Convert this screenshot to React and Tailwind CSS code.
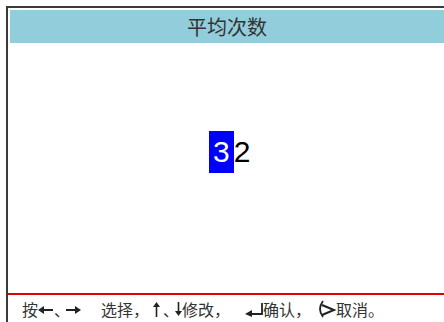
import React from "react";

const cjk = { fontFamily: '"Noto Sans CJK SC", "Noto Sans", sans-serif' };

function LeftArrow() {
  return (
    <svg width="15" height="16" viewBox="0 0 15 16" className="shrink-0">
      <line x1="4" y1="9" x2="15" y2="9" stroke="#222" strokeWidth="2" />
      <polygon points="0,9 6,5 6,13" fill="#222" />
    </svg>
  );
}
function RightArrow() {
  return (
    <svg width="15" height="16" viewBox="0 0 15 16" className="shrink-0">
      <line x1="0" y1="9" x2="10" y2="9" stroke="#222" strokeWidth="2" />
      <polygon points="15,9 9,5 9,13" fill="#222" />
    </svg>
  );
}
function UpArrow() {
  return (
    <svg width="7" height="16" viewBox="0 0 7 16" className="shrink-0">
      <line x1="3.5" y1="4" x2="3.5" y2="16" stroke="#222" strokeWidth="1.6" />
      <polygon points="3.5,1 0,6 7,6" fill="#222" />
    </svg>
  );
}
function DownArrow() {
  return (
    <svg width="7" height="16" viewBox="0 0 7 16" className="shrink-0">
      <line x1="3.5" y1="1" x2="3.5" y2="12" stroke="#222" strokeWidth="1.6" />
      <polygon points="3.5,15 0,10 7,10" fill="#222" />
    </svg>
  );
}
function EnterIcon() {
  return (
    <svg width="18" height="16" viewBox="0 0 18 16" className="shrink-0">
      <polyline points="4,13 17,13 17,2" fill="none" stroke="#222" strokeWidth="1.8" />
      <polygon points="0,13 7,9 7,16" fill="#222" />
    </svg>
  );
}
function CancelIcon() {
  return (
    <svg width="19" height="18" viewBox="0 0 19 18" className="shrink-0">
      <path d="M6 1 Q0 9 6 17" fill="none" stroke="#222" strokeWidth="1.8" />
      <polyline points="5,5 17,10 5,15" fill="none" stroke="#222" strokeWidth="2.2" />
    </svg>
  );
}

export default function App() {
  return (
    <div className="w-[444px] h-[322px] bg-white pl-[6px] pt-[6px] overflow-hidden">
      <div className="h-full border-l-2 border-t-2 border-[#3a3a3a] flex flex-col">
        <div
          className="mt-[2px] ml-[2px] h-[33px] bg-[#92cddc] flex items-center justify-center text-[20px] text-[#333333]"
          style={cjk}
        >
          平均次数
        </div>
        <div className="h-[250px] pt-[88px] pl-[201px]">
          <div
            className="flex h-[42px] text-[30px] leading-[42px]"
            style={{ fontFamily: '"Liberation Sans", Arial, sans-serif' }}
          >
            <span className="bg-[#0000ff] text-white px-[4px]">3</span>
            <span className="text-black">2</span>
          </div>
        </div>
        <div className="h-[2px] bg-[#e00000]" />
        <div
          className="flex-1 flex items-center pl-[14px] text-[16px] text-[#333333] leading-none"
          style={cjk}
        >
          <span>按</span>
          <LeftArrow />
          <span className="ml-[1px]">、</span>
          <span className="-ml-[4px]"><RightArrow /></span>
          <span className="ml-[20px]">选择，</span>
          <span className="ml-[4px]"><UpArrow /></span>
          <span className="ml-[3px]">、</span>
          <span className="-ml-[4px]"><DownArrow /></span>
          <span>修改，</span>
          <span className="ml-[15px]"><EnterIcon /></span>
          <span>确认，</span>
          <span className="ml-[6px]"><CancelIcon /></span>
          <span>取消。</span>
        </div>
      </div>
    </div>
  );
}
